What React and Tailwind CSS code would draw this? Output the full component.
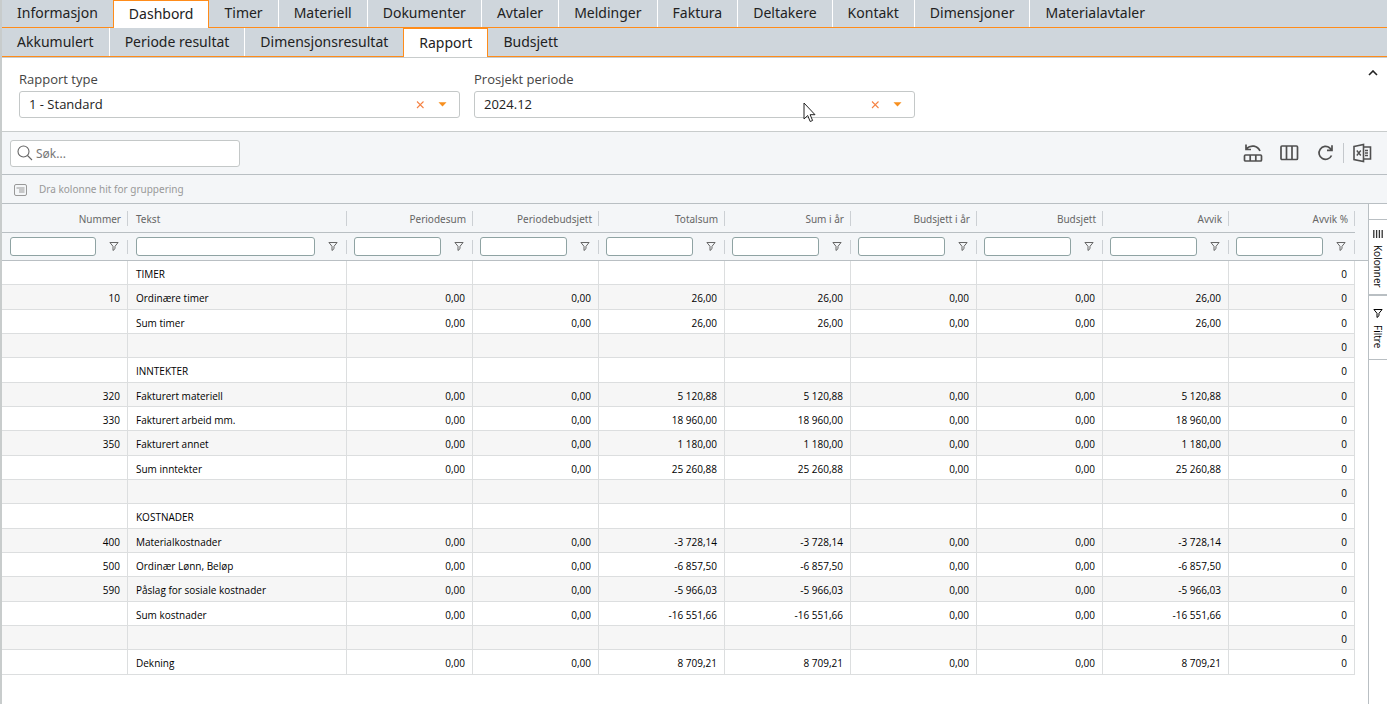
import clsx from 'clsx';

const mainTabs = [
  'Informasjon',
  'Dashbord',
  'Timer',
  'Materiell',
  'Dokumenter',
  'Avtaler',
  'Meldinger',
  'Faktura',
  'Deltakere',
  'Kontakt',
  'Dimensjoner',
  'Materialavtaler',
];

const subTabs = ['Akkumulert', 'Periode resultat', 'Dimensjonsresultat', 'Rapport', 'Budsjett'];

const columns = [
  'Nummer',
  'Tekst',
  'Periodesum',
  'Periodebudsjett',
  'Totalsum',
  'Sum i år',
  'Budsjett i år',
  'Budsjett',
  'Avvik',
  'Avvik %',
];

const sum = (nr, text, total) => [nr, text, '0,00', '0,00', total, total, '0,00', '0,00', total, '0'];
const heading = (text) => ['', text, '', '', '', '', '', '', '', '0'];

const rows = [
  heading('TIMER'),
  sum('10', 'Ordinære timer', '26,00'),
  sum('', 'Sum timer', '26,00'),
  heading(''),
  heading('INNTEKTER'),
  sum('320', 'Fakturert materiell', '5 120,88'),
  sum('330', 'Fakturert arbeid mm.', '18 960,00'),
  sum('350', 'Fakturert annet', '1 180,00'),
  sum('', 'Sum inntekter', '25 260,88'),
  heading(''),
  heading('KOSTNADER'),
  sum('400', 'Materialkostnader', '-3 728,14'),
  sum('500', 'Ordinær Lønn, Beløp', '-6 857,50'),
  sum('590', 'Påslag for sosiale kostnader', '-5 966,03'),
  sum('', 'Sum kostnader', '-16 551,66'),
  heading(''),
  sum('', 'Dekning', '8 709,21'),
];

function FunnelIcon() {
  return (
    <svg width="10" height="10" viewBox="0 0 10 10" fill="none" stroke="currentColor">
      <path d="M.9 .5h8.200L6 4.300v2.400L4 8.500V4.300z" />
    </svg>
  );
}

function TabBar({ tabs, active, label, tabClass }) {
  return (
    <nav
      aria-label={label}
      className="flex shrink-0 items-stretch border-b border-b-[#ff8c1a] bg-[#cfd6dc] text-sm leading-5 text-[#222]"
    >
      {tabs.map((tab, i) => (
        <button
          key={tab}
          type="button"
          className={clsx(
            'px-[15px]',
            tabClass,
            tab === active && 'relative -mb-px border-x border-t border-[#ff8c1a] bg-white',
            tab !== active && tabs[i + 1] !== active && i < tabs.length - 1 && 'border-r border-white'
          )}
        >
          {tab}
        </button>
      ))}
    </nav>
  );
}

function SelectField({ id, label, value }) {
  return (
    <div>
      <label htmlFor={id} className="block font-['Open_Sans'] text-[13px] leading-[18px] font-medium text-[#444]">
        {label}
      </label>
      <div className="relative mt-[3px]">
        <select
          id={id}
          className="block w-full h-[27px] appearance-none rounded-[3px] border border-[#c4c8c8] bg-white px-[9px] pb-[2px] font-['Open_Sans'] text-[13px] leading-4 text-[#222]"
        >
          <option>{value}</option>
        </select>
        <button type="button" aria-label="Tøm" className="absolute right-[35px] top-[9px]">
          <svg width="9" height="9" viewBox="0 0 9 9" stroke="#f58345" strokeWidth="1.1">
            <path d="M1 1.500l6.500 6.500M7.500 1.500L1 8" />
          </svg>
        </button>
        <svg className="pointer-events-none absolute right-[13px] top-[11px]" width="9" height="5" viewBox="0 0 9 5">
          <path d="M.5 .3h8L4.500 4.500z" fill="#f78f1e" />
        </svg>
      </div>
    </div>
  );
}

function Toolbar() {
  return (
    <div className="flex h-[43px] items-center justify-between border-b border-[#b9bfc3] pl-2 pr-[15px]">
      <div className="relative">
        <svg
          className="pointer-events-none absolute left-[7px] top-[5px]"
          width="16"
          height="16"
          viewBox="0 0 16 16"
          fill="none"
          stroke="#666"
          strokeWidth="1.1"
        >
          <circle cx="6.500" cy="6.500" r="5.500" />
          <path d="M10.500 10.500l4.500 4.500" />
        </svg>
        <input
          type="text"
          aria-label="Søk"
          placeholder="Søk..."
          className="block h-[27px] w-[230px] rounded-[3px] border border-[#c4c8c8] bg-white pl-[25px] text-xs text-[#444] placeholder:text-[#777]"
        />
      </div>
      <div className="flex items-center text-[#505050]">
        <button type="button" aria-label="Tilbakestill">
          <svg width="20" height="20" viewBox="0 0 20 20" fill="none" stroke="currentColor" strokeWidth="1.700">
            <rect x="1.500" y="12" width="17" height="6" rx="1" />
            <path d="M7.200 12v6M12.800 12v6M17 8C14.500 2.500 8 1.500 3.500 5.500M3 1.500V6.500H8" />
          </svg>
        </button>
        <button type="button" aria-label="Velg kolonner" className="ml-4">
          <svg width="20" height="20" viewBox="0 0 20 20" fill="none" stroke="currentColor" strokeWidth="1.700">
            <rect x="2" y="3" width="16.500" height="13.500" rx="1" />
            <path d="M7.500 3v13.500M13 3v13.500" />
          </svg>
        </button>
        <button type="button" aria-label="Oppdater" className="ml-4">
          <svg width="20" height="20" viewBox="0 0 20 20" fill="none" stroke="currentColor" strokeWidth="1.700">
            <path d="M16.500 12.500A6.500 6.500 0 1 1 14.800 5L16.500 7M17 2.300V7.300H12" />
          </svg>
        </button>
        <div className="mx-2 h-5 border-l border-[#c4c8cc]" />
        <button type="button" aria-label="Eksporter til Excel">
          <svg width="20" height="20" viewBox="0 0 20 20" fill="none" stroke="currentColor" strokeWidth="1.600">
            <path d="M2 3.500L11.500 1.500v17L2 16.500zM11.500 4h7v12h-7M13 7.500h3M13 10h3M13 12.500h3" />
            <path d="M4.800 7.500l4 5M8.800 7.500l-4 5" strokeWidth="1.400" />
          </svg>
        </button>
      </div>
    </div>
  );
}

function ReportTable() {
  return (
    <table className="w-full table-fixed border-separate border-spacing-0 text-[10px] leading-4">
      <colgroup>
        <col className="w-[126px]" />
        <col className="w-[219px]" />
        {columns.slice(2).map((c) => (
          <col key={c} />
        ))}
        <col className="w-[13px]" />
      </colgroup>
      <thead className="bg-[#f4f6f8] text-[#666]">
        <tr className="h-[29px]">
          {columns.map((c) => (
            <th key={c} scope="col" className="border-b border-[#b9bfc3] p-0 pt-px font-normal">
              <div
                className={clsx(
                  'flex h-[15px] items-center border-r border-[#ccd0d4] px-[6px]',
                  c === 'Tekst' ? 'pl-2' : 'justify-end'
                )}
              >
                {c}
              </div>
            </th>
          ))}
          <td />
        </tr>
        <tr className="h-7">
          {columns.map((c, i) => (
            <td key={c} className="border-b border-[#b9bfc3] p-0">
              <div className="flex items-center">
                <input
                  type="text"
                  aria-label={`Filtrer ${c}`}
                  className={clsx(
                    'h-[19px] min-w-0 flex-1 rounded-[3px] border border-[#8fa3a3] bg-white px-1',
                    i < 2 ? 'ml-2' : 'ml-[7px]'
                  )}
                />
                <button type="button" aria-label={`Filtermeny ${c}`} className="ml-[13px] mr-2">
                  <FunnelIcon />
                </button>
                <div className="h-[14px] border-r border-[#ccd0d4]" />
              </div>
            </td>
          ))}
          <td className="border-b border-[#b9bfc3]" />
        </tr>
      </thead>
      <tbody className="font-['Open_Sans'] text-black">
        {rows.map((row, r) => (
          <tr key={r} className="h-6 nth-[3n+2]:h-[25px]">
            {row.map((cell, i) => (
              <td
                key={i}
                className={clsx(
                  'whitespace-nowrap border-b border-r border-[#dcdedf] pt-[2px] pb-0',
                  r % 2 === 1 && 'bg-[#f6f6f6]',
                  i === 1 ? 'pl-2 text-left' : 'pr-[7px] text-right'
                )}
              >
                {cell}
              </td>
            ))}
            <td />
          </tr>
        ))}
      </tbody>
    </table>
  );
}

function SidePanel() {
  return (
    <aside className="flex w-[19px] shrink-0 flex-col border-l border-[#b9bfc3] bg-white font-['Open_Sans'] text-[10px] leading-4 text-black">
      <div className="h-4 border-b border-[#b9bfc3]" />
      <button
        type="button"
        className="flex h-[76px] w-full flex-col items-center gap-[6px] border-b-2 border-[#b9bfc3] pt-[10px]"
      >
        <svg width="10" height="9" viewBox="0 0 10 9" stroke="#333" strokeWidth="1.300">
          <path d="M.8 0v8M3.600 0v8M6.400 0v8M9.200 0v8" />
        </svg>
        <span className="[writing-mode:vertical-rl]">Kolonner</span>
      </button>
      <button
        type="button"
        className="flex h-16 w-full flex-col items-center gap-[6px] border-b border-[#b9bfc3] pt-[13px]"
      >
        <FunnelIcon />
        <span className="[writing-mode:vertical-rl]">Filtre</span>
      </button>
    </aside>
  );
}

export default function App() {
  return (
    <div className="relative flex min-h-screen flex-col border-l-2 border-[#c8cccc] bg-white font-['Noto_Sans','Open_Sans',sans-serif]">
      <TabBar label="Hovedmeny" tabs={mainTabs} active="Dashbord" tabClass="min-h-[27px] pb-[2px]" />
      <TabBar label="Dashbord" tabs={subTabs} active="Rapport" tabClass="min-h-7" />

      {/* Filters */}
      <section className="relative border-y border-[#c8cccc] px-[17px] pt-3 pb-[13px]">
        <div className="grid grid-cols-3 gap-[14px]">
          <SelectField id="type" label="Rapport type" value="1 - Standard" />
          <SelectField id="period" label="Prosjekt periode" value="2024.12" />
        </div>
        <button type="button" aria-label="Skjul filter" className="absolute right-[9px] top-3">
          <svg width="10" height="6" viewBox="0 0 10 6" fill="none" stroke="#222" strokeWidth="1.600">
            <path d="M1 5l4-4 4 4" />
          </svg>
        </button>
      </section>

      <main className="flex flex-1 flex-col">
        <div className="bg-[#f4f6f8]">
          <Toolbar />
          <div className="flex h-[29px] items-center gap-3 border-b border-[#b9bfc3] pl-3 pt-px text-[10px] text-[#999]">
            <svg width="13" height="12" viewBox="0 0 13 12" fill="none" stroke="currentColor">
              <rect x=".5" y=".5" width="12" height="11" rx="1.500" />
              <path d="M2.500 4h8M5 6h5.500M5 8h5.500" />
            </svg>
            Dra kolonne hit for gruppering
          </div>
        </div>
        <div className="flex flex-1">
          <div className="min-w-0 flex-1">
            <ReportTable />
          </div>
          <SidePanel />
        </div>
      </main>

      {/* Mouse pointer */}
      <svg className="pointer-events-none absolute left-[801px] top-[102px]" width="13" height="21" viewBox="0 0 13 21">
        <path d="M1 1v16l3.700-3.500L7.200 19.500l2.400-1L7.100 12.700H12z" fill="#fff" stroke="#222" />
      </svg>
    </div>
  );
}
